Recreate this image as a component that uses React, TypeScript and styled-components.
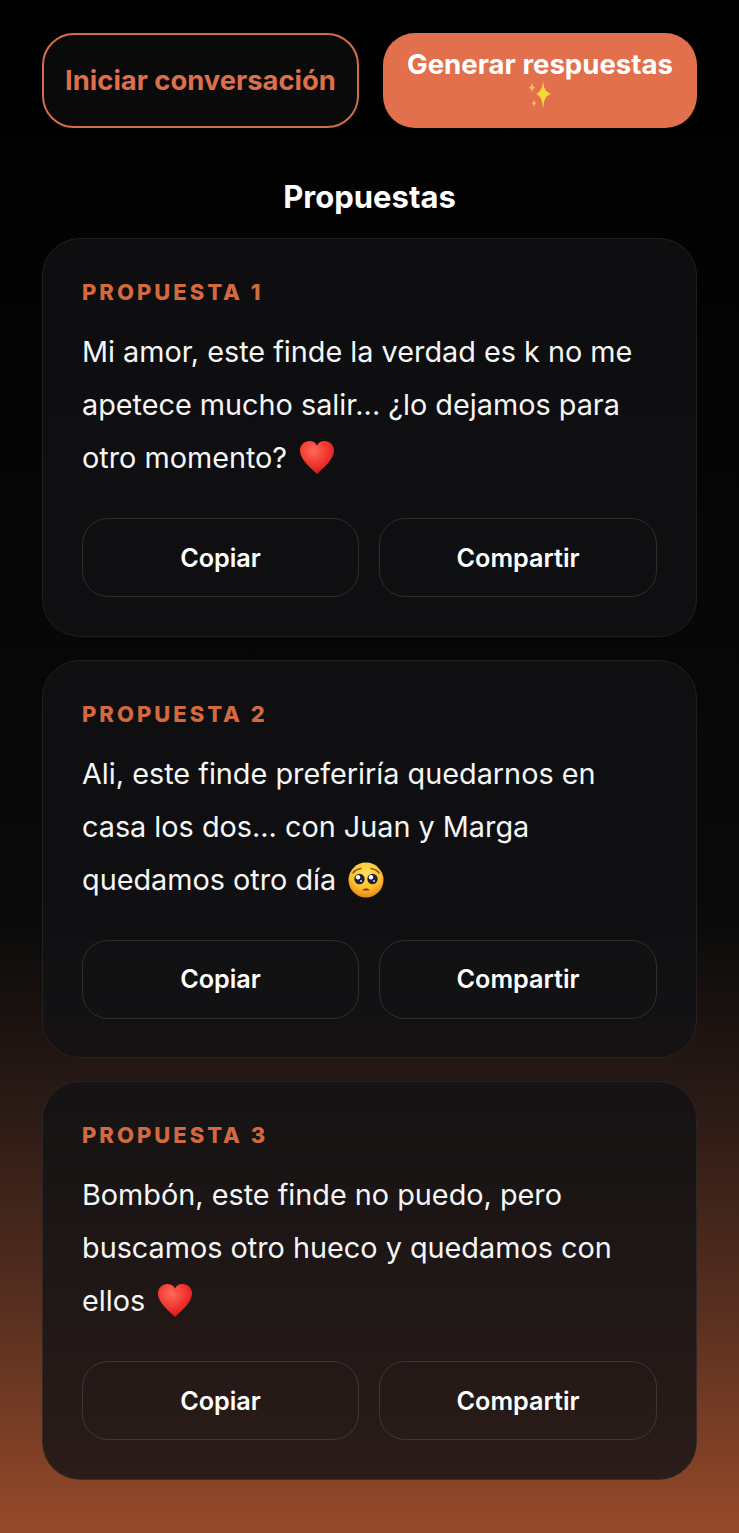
import React from 'react'
import styled, { createGlobalStyle } from 'styled-components'

const GlobalStyle = createGlobalStyle`
  html, body {
    margin: 0;
    padding: 0;
    background: #000;
  }
  * {
    box-sizing: border-box;
  }
`

const Page = styled.div`
  width: 739px;
  height: 1533px;
  padding: 33px 42px 0;
  overflow: hidden;
  font-family: Inter, "Liberation Sans", sans-serif;
  color: #fff;
  background: linear-gradient(180deg, #000 0%, #0a0a0a 60%, #2a1a15 72%, #5a3020 86%, #974a2a 100%);
`

const TopBar = styled.div`
  display: flex;
  gap: 24px;
`

const OutlineButton = styled.button`
  width: 317px;
  height: 95px;
  padding: 0 10px 2px;
  border: 2px solid #d56d4c;
  border-radius: 32px;
  background: #0a0a0b;
  color: #de6f4c;
  font-family: inherit;
  font-size: 27.4px;
  font-weight: 700;
`

const FilledButton = styled.button`
  width: 314px;
  height: 95px;
  padding: 0 10px 4px;
  border: 0;
  border-radius: 32px;
  background: #e2704c;
  color: #fff;
  font-family: inherit;
  font-size: 27.6px;
  line-height: 32px;
  font-weight: 700;
  display: flex;
  flex-direction: column;
  align-items: center;
  justify-content: center;
`

const Title = styled.h2`
  margin: 0;
  padding: 52px 0 24px;
  height: 110px;
  text-align: center;
  font-size: 31px;
  line-height: 34px;
  font-weight: 700;
`

const List = styled.div`
  display: flex;
  flex-direction: column;
  gap: 23px;
`

const Card = styled.section`
  height: 398.5px;
  padding: 39px 39px 0;
  border: 1px solid rgba(255, 255, 255, 0.07);
  border-radius: 38px;
  background: rgba(18, 18, 20, 0.79);
`

const Label = styled.div`
  color: #d2693f;
  font-size: 22px;
  line-height: 28px;
  font-weight: 800;
  letter-spacing: 3px;
`

const Message = styled.p`
  margin: 19px 0 0;
  height: 159px;
  font-size: 28.8px;
  line-height: 53px;
  font-weight: 400;
  color: #f6f6f6;
`

const Actions = styled.div`
  display: grid;
  grid-template-columns: 277px 278px;
  gap: 20px;
  margin-top: 34px;
`

const ActionButton = styled.button`
  height: 79px;
  border: 1px solid rgba(255, 255, 255, 0.12);
  border-radius: 26px;
  background: transparent;
  color: #fff;
  font-family: inherit;
  font-size: 25.2px;
  font-weight: 600;
`

const Emoji = styled.svg`
  display: inline-block;
  vertical-align: -8px;
  margin-left: 4px;
`

const Heart = () => (
  <Emoji width="36" height="36" viewBox="0 0 38 38">
    <defs>
      <radialGradient id="heartFill" cx="0.4" cy="0.3" r="0.8">
        <stop offset="0" stopColor="#ff6a5c" />
        <stop offset="0.55" stopColor="#f0342c" />
        <stop offset="1" stopColor="#c9141a" />
      </radialGradient>
    </defs>
    <path
      d="M19 36C13 30 2 22 1 12 0.5 5 6 1 11 1c4 0 7 2 8 5 1-3 4-5 8-5 5 0 10.5 4 10 11-1 10-12 18-18 24z"
      fill="url(#heartFill)"
    />
  </Emoji>
)

const Pleading = () => (
  <Emoji width="36" height="36" viewBox="0 0 36 36">
    <defs>
      <radialGradient id="faceFill" cx="0.5" cy="0.3" r="0.75">
        <stop offset="0" stopColor="#ffe45c" />
        <stop offset="0.6" stopColor="#fbbf2e" />
        <stop offset="1" stopColor="#e57d14" />
      </radialGradient>
    </defs>
    <circle cx="18" cy="18" r="17.5" fill="url(#faceFill)" />
    <circle cx="11.5" cy="17" r="5.2" fill="#232033" />
    <circle cx="24.5" cy="17" r="5.2" fill="#232033" />
    <circle cx="10" cy="15.200" r="2.200" fill="#fff" />
    <circle cx="23" cy="15.200" r="2.200" fill="#fff" />
    <circle cx="13" cy="19" r="1" fill="#cfd8ff" />
    <circle cx="26" cy="19" r="1" fill="#cfd8ff" />
    <path d="M5 11c2-3 5-4 8-4.500M31 11c-2-3-5-4-8-4.500" stroke="#8a5516" strokeWidth="1.500" fill="none" strokeLinecap="round" />
    <path d="M14.500 28c1-2 6-2 7 0-1 .8-6 .8-7 0z" fill="#7a3b12" />
  </Emoji>
)

const Sparkles = () => (
  <svg width="26" height="30" viewBox="0 0 26 28" preserveAspectRatio="none">
    <path d="M16 1c.8 7 2.500 10 8 12-5.500 1.500-7.200 5-8 14-.8-9-2.500-12.500-7-14 4.500-2 6.200-5 7-12z" fill="#fbd43c" />
    <path d="M5 2c.4 3 1.300 4.300 3.500 5-2.200.6-3.100 2-3.500 5-.4-3-1.300-4.400-3.500-5 2.200-.7 3.100-2 3.500-5z" fill="#f4bf55" />
    <path d="M7 18c.4 2.200 1 3.200 2.700 3.600-1.700.4-2.300 1.400-2.700 3.400-.4-2-1-3-2.700-3.400 1.700-.4 2.300-1.400 2.700-3.600z" fill="#f4bf55" />
  </svg>
)

const proposals: { label: string; text: string[]; emoji: React.ReactNode }[] = [
  {
    label: 'PROPUESTA 1',
    text: ['Mi amor, este finde la verdad es k no me', 'apetece mucho salir... ¿lo dejamos para', 'otro momento? '],
    emoji: <Heart />,
  },
  {
    label: 'PROPUESTA 2',
    text: ['Ali, este finde preferiría quedarnos en', 'casa los dos... con Juan y Marga', 'quedamos otro día '],
    emoji: <Pleading />,
  },
  {
    label: 'PROPUESTA 3',
    text: ['Bombón, este finde no puedo, pero', 'buscamos otro hueco y quedamos con', 'ellos '],
    emoji: <Heart />,
  },
]

const App = () => (
  <Page>
    <GlobalStyle />
    <TopBar>
      <OutlineButton>Iniciar conversación</OutlineButton>
      <FilledButton>
        Generar respuestas
        <Sparkles />
      </FilledButton>
    </TopBar>
    <Title>Propuestas</Title>
    <List>
      {proposals.map((proposal) => (
        <Card key={proposal.label}>
          <Label>{proposal.label}</Label>
          <Message>
            {proposal.text[0]}
            <br />
            {proposal.text[1]}
            <br />
            {proposal.text[2]}
            {proposal.emoji}
          </Message>
          <Actions>
            <ActionButton>Copiar</ActionButton>
            <ActionButton>Compartir</ActionButton>
          </Actions>
        </Card>
      ))}
    </List>
  </Page>
)

export default App
